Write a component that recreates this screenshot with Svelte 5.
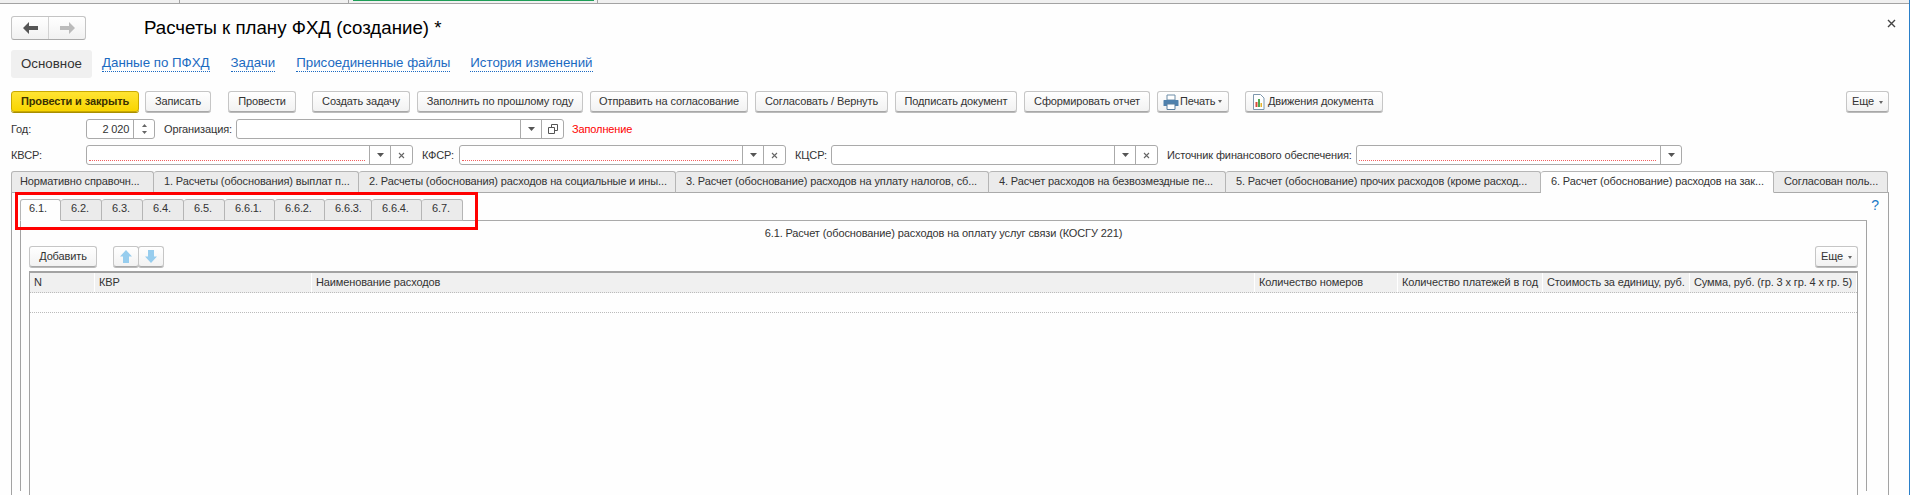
<script>
	const sections = [
		{ label: 'Основное', active: true, gap: 10 },
		{ label: 'Данные по ПФХД', gap: 21 },
		{ label: 'Задачи', gap: 21 },
		{ label: 'Присоединенные файлы', gap: 20 },
		{ label: 'История изменений', gap: 0 }
	];

	const commands = [
		{ label: 'Провести и закрыть', w: 128, gap: 6, primary: true },
		{ label: 'Записать', w: 66, gap: 17 },
		{ label: 'Провести', w: 68, gap: 16 },
		{ label: 'Создать задачу', w: 98, gap: 7 },
		{ label: 'Заполнить по прошлому году', w: 166, gap: 7 },
		{ label: 'Отправить на согласование', w: 158, gap: 7 },
		{ label: 'Согласовать / Вернуть', w: 133, gap: 7 },
		{ label: 'Подписать документ', w: 122, gap: 7 },
		{ label: 'Сформировать отчет', w: 126, gap: 7 }
	];

	const mainTabs = [
		{ label: 'Нормативно справочн...', w: 143 },
		{ label: '1. Расчеты (обоснования) выплат п...', w: 205 },
		{ label: '2. Расчеты (обоснования) расходов на социальные и ины...', w: 317 },
		{ label: '3. Расчет (обоснование) расходов на уплату налогов, сб...', w: 313 },
		{ label: '4. Расчет расходов на безвозмездные пе...', w: 237 },
		{ label: '5. Расчет (обоснование) прочих расходов (кроме расход...', w: 315 },
		{ label: '6. Расчет (обоснование) расходов на зак...', w: 233, active: true },
		{ label: 'Согласован поль...', w: 114 }
	];

	const subTabs = [
		{ label: '6.1.', w: 41, active: true },
		{ label: '6.2.', w: 41 },
		{ label: '6.3.', w: 41 },
		{ label: '6.4.', w: 41 },
		{ label: '6.5.', w: 41 },
		{ label: '6.6.1.', w: 50 },
		{ label: '6.6.2.', w: 50 },
		{ label: '6.6.3.', w: 47 },
		{ label: '6.6.4.', w: 50 },
		{ label: '6.7.', w: 41 }
	];

	const columns = [
		{ label: 'N', w: 65 },
		{ label: 'КВР', w: 217 },
		{ label: 'Наименование расходов', w: 943 },
		{ label: 'Количество номеров', w: 143 },
		{ label: 'Количество платежей в год', w: 145 },
		{ label: 'Стоимость за единицу, руб.', w: 147 },
		{ label: 'Сумма, руб. (гр. 3 х гр. 4 х гр. 5)', w: 167 }
	];
</script>

{#snippet field(width, required, clear, copy)}
	<div class="field" style={`width:${width}px`}>
		<div class="field-value">
			{#if required}<span class="required"></span>{/if}
		</div>
		<span class="field-btn">
			<svg width="7" height="4" viewBox="0 0 7 4"><path d="M0 0h7L3.5 4z" fill="#555" /></svg>
		</span>
		{#if clear}
			<span class="field-btn">
				<svg width="7" height="7" viewBox="0 0 7 7"><path d="M1 1l5 5M6 1L1 6" stroke="#666" stroke-width="1.1" /></svg>
			</span>
		{/if}
		{#if copy}
			<span class="field-btn">
				<svg width="10" height="10" viewBox="0 0 10 10" fill="none" stroke="#555"><path d="M3.5 3V.5h6v6H7" /><path d="M.5 3.5h6v6h-6z" /></svg>
			</span>
		{/if}
	</div>
{/snippet}

<div class="page">
	<div class="window-strip">
		<span class="strip-tab" style="width:180px"></span>
		<span class="strip-tab" style="width:169px"></span>
		<span class="strip-tab current" style="width:249px"><i></i></span>
	</div>

	<header class="title-row">
		<div class="nav-group">
			<button class="nav-btn" aria-label="Назад">
				<svg width="15" height="12" viewBox="0 0 15 12"><path d="M0 6l6-6v4h9v4H6v4z" fill="#555" /></svg>
			</button>
			<button class="nav-btn" aria-label="Вперед">
				<svg width="15" height="12" viewBox="0 0 15 12"><path d="M15 6L9 0v4H0v4h9v4z" fill="#bbb" /></svg>
			</button>
		</div>
		<h1>Расчеты к плану ФХД (создание) *</h1>
		<svg class="close" width="9" height="9" viewBox="0 0 9 9"><path d="M1 1l7 7M8 1L1 8" stroke="#444" stroke-width="1.4" /></svg>
	</header>

	<nav class="sections">
		{#each sections as s}
			<span class="section" class:active={s.active} style={`margin-right:${s.gap}px`}>{s.label}</span>
		{/each}
	</nav>

	<div class="commands">
		{#each commands as c}
			<button class="btn" class:primary={c.primary} style={`width:${c.w}px;margin-right:${c.gap}px`}>{c.label}</button>
		{/each}
		<button class="btn with-icon print">
			<svg width="16" height="16" viewBox="0 0 16 16">
				<path d="M4 1h8v5H4z" fill="#fff" stroke="#6f8ea8" />
				<path d="M1 6h14a.5.5 0 0 1 .5.5V12H12v-2H4v2H.5V6.5A.5.5 0 0 1 1 6z" fill="#4f81ad" />
				<path d="M4 10h8v5.5H4z" fill="#fff" stroke="#5a7f9f" />
			</svg>
			Печать <i class="caret"></i>
		</button>
		<button class="btn with-icon moves">
			<svg width="13" height="16" viewBox="0 0 13 16">
				<path d="M1.5.5h7l3.500 3.500v11.500h-10.500z" fill="#fff" stroke="#7d97ad" />
				<path d="M3.500 8h2v5h-2z" fill="#d84a3a" />
				<path d="M6 5h2v8H6z" fill="#4fa64f" />
				<path d="M8.500 9h1.500v4H8.500z" fill="#e5b32a" />
			</svg>
			Движения документа
		</button>
		<button class="btn more top-more">Еще <i class="caret"></i></button>
	</div>

	<div class="form-row year-row">
		<span class="row-label">Год:</span>
		<div class="field year">
			<div class="year-value">2 020</div>
			<span class="spin">
				<svg width="5" height="3" viewBox="0 0 5 3"><path d="M0 3h5L2.500 0z" fill="#666" /></svg>
				<svg width="5" height="3" viewBox="0 0 5 3"><path d="M0 0h5L2.500 3z" fill="#666" /></svg>
			</span>
		</div>
		<span class="org-label">Организация:</span>
		{@render field(328, false, false, true)}
		<span class="status">Заполнение</span>
	</div>

	<div class="form-row codes-row">
		<span class="row-label">КВСР:</span>
		{@render field(327, true, true, false)}
		<span class="kfsr-label">КФСР:</span>
		{@render field(327, true, true, false)}
		<span class="kcsr-label">КЦСР:</span>
		{@render field(327, false, true, false)}
		<span class="source-label">Источник финансового обеспечения:</span>
		{@render field(326, true, false, false)}
	</div>

	<div class="main-tabs">
		{#each mainTabs as t}
			<div class="main-tab" class:active={t.active} style={`width:${t.w}px`}>{t.label}</div>
		{/each}
	</div>

	<section class="main-panel">
		<div class="help-row"><span class="help">?</span></div>

		<div class="sub-wrap">
			<div class="sub-tabs">
				{#each subTabs as t}
					<div class="sub-tab" class:active={t.active} style={`width:${t.w}px`}>{t.label}</div>
				{/each}
				<span class="marker"></span>
			</div>

			<div class="sub-panel">
				<div class="sub-title">6.1. Расчет (обоснование) расходов на оплату услуг связи (КОСГУ 221)</div>
				<div class="table-bar">
					<button class="btn add">Добавить</button>
					<div class="move-group">
						<button class="btn move" aria-label="Вверх">
							<svg width="12" height="13" viewBox="0 0 12 13"><path d="M6 0l6 6.500H9V13H3V6.500H0z" fill="#97cdee" /></svg>
						</button>
						<button class="btn move" aria-label="Вниз">
							<svg width="12" height="13" viewBox="0 0 12 13"><path d="M6 13L0 6.500h3V0h6v6.500h3z" fill="#97cdee" /></svg>
						</button>
					</div>
					<button class="btn more">Еще <i class="caret"></i></button>
				</div>

				<div class="table">
					<div class="thead">
						{#each columns as c}
							<div class="th" style={`width:${c.w}px`}>{c.label}</div>
						{/each}
					</div>
					<div class="empty-row"></div>
				</div>
			</div>
		</div>
	</section>
</div>

<style>
	:global(body) {
		margin: 0;
		background: #fff;
	}

	.page {
		width: 1909px;
		height: 495px;
		overflow: hidden;
		border-right: 1px solid #2a7fc9;
		background: #fefefe;
		font: 11px/1 'Liberation Sans', Arial, sans-serif;
		letter-spacing: -0.12px;
		color: #333;
	}

	button {
		font: inherit;
		letter-spacing: inherit;
		color: inherit;
		padding: 0;
		cursor: pointer;
	}

	.window-strip {
		display: flex;
		height: 3px;
		background: #f0f0f0;
		border-bottom: 1px solid #a3a3a3;
	}
	.strip-tab {
		box-sizing: border-box;
		border-right: 1px solid #a3a3a3;
	}
	.strip-tab.current {
		padding-left: 4px;
	}
	.strip-tab.current i {
		display: block;
		width: 241px;
		height: 1px;
		background: #1e9e57;
	}

	.title-row {
		display: flex;
		align-items: center;
		height: 24px;
		padding: 12px 0 0 11px;
	}
	.nav-group {
		display: flex;
		width: 75px;
		height: 24px;
		box-sizing: border-box;
		border: 1px solid #c4c4c4;
		border-bottom-color: #aaa;
		border-radius: 3px;
		background: linear-gradient(#fff, #f1f1f1);
	}
	.nav-btn {
		flex: 1;
		display: flex;
		align-items: center;
		justify-content: center;
		border: 0;
		background: none;
	}
	.nav-btn + .nav-btn {
		border-left: 1px solid #d2d2d2;
	}
	h1 {
		margin: 0 0 0 58px;
		font-size: 18.7px;
		font-weight: 400;
		letter-spacing: 0;
		color: #000;
	}
	.close {
		margin-left: auto;
		margin-right: 13px;
		margin-top: -10px;
	}

	.sections {
		display: flex;
		align-items: center;
		height: 28px;
		margin: 10px 0 0 11px;
		font-size: 13.3px;
		letter-spacing: 0;
	}
	.section {
		color: #1b6ac1;
		border-bottom: 1px dotted #1b6ac1;
		padding-bottom: 1px;
	}
	.section.active {
		width: 81px;
		height: 28px;
		box-sizing: border-box;
		line-height: 28px;
		text-align: center;
		padding: 0;
		border: 0;
		border-radius: 3px;
		background: #f0f0f0;
		color: #333;
	}

	.commands {
		display: flex;
		height: 21px;
		margin: 13px 0 0 11px;
		padding-right: 20px;
	}
	.btn {
		height: 21px;
		box-sizing: border-box;
		border: 1px solid #c6c6c6;
		border-bottom: 1px solid #a8a8a8;
		border-radius: 3px;
		background: linear-gradient(#fff, #f2f2f2);
		box-shadow: 0 1px 0 #bbb;
		text-align: center;
		white-space: nowrap;
		color: #333;
	}
	.btn.primary {
		background: linear-gradient(#ffe433, #f9d500);
		border-color: #c9a900;
		box-shadow: 0 1px 0 #a98f00;
		font-weight: 700;
		color: #3b3100;
	}
	.with-icon {
		display: flex;
		align-items: center;
	}
	.print {
		width: 72px;
		margin-right: 16px;
		padding-left: 5px;
		gap: 1px;
	}
	.moves {
		width: 138px;
		padding-left: 6px;
		gap: 3px;
	}
	.more {
		width: 43px;
	}
	.top-more {
		margin-left: auto;
	}
	.caret {
		display: inline-block;
		margin-left: 2px;
		vertical-align: middle;
		border: 2px solid transparent;
		border-top: 3px solid #666;
		border-bottom: 0;
	}

	.form-row {
		display: flex;
		align-items: center;
		height: 20px;
		padding-left: 11px;
	}
	.year-row {
		margin-top: 7px;
	}
	.codes-row {
		margin-top: 6px;
	}
	.row-label {
		width: 75px;
		flex: none;
	}
	.org-label {
		width: 72px;
		margin-left: 9px;
		white-space: nowrap;
	}
	.kfsr-label {
		width: 37px;
		margin-left: 9px;
	}
	.kcsr-label {
		width: 36px;
		margin-left: 9px;
	}
	.source-label {
		width: 189px;
		margin-left: 9px;
		white-space: nowrap;
	}
	.status {
		margin-left: 8px;
		color: #f00;
	}
	.field {
		display: flex;
		flex: none;
		height: 20px;
		box-sizing: border-box;
		border: 1px solid #aaa;
		border-radius: 3px;
		background: #fff;
	}
	.field-value {
		flex: 1;
	}
	.required {
		display: block;
		margin: 14px 4px 0 2px;
		border-bottom: 1px dotted #f06060;
	}
	.field-btn {
		display: flex;
		align-items: center;
		justify-content: center;
		width: 20px;
		border-left: 1px solid #aaa;
	}
	.field-btn + .field-btn {
		width: 21px;
	}
	.year {
		width: 69px;
	}
	.year-value {
		width: 43px;
		line-height: 18px;
		text-align: right;
	}
	.spin {
		display: flex;
		flex-direction: column;
		align-items: center;
		justify-content: center;
		gap: 4px;
		width: 20px;
		margin-left: 4px;
		border-left: 1px solid #aaa;
	}

	.main-tabs {
		display: flex;
		height: 21px;
		margin: 6px 0 0 11px;
		border-bottom: 1px solid #aaa;
		width: 1878px;
	}
	.main-tab {
		box-sizing: border-box;
		height: 22px;
		padding-left: 10px;
		line-height: 18px;
		white-space: nowrap;
		overflow: hidden;
		background: #ebebeb;
		border: 1px solid #b5b5b5;
		border-left: 0;
		border-bottom: 1px solid #aaa;
		border-radius: 3px 3px 0 0;
		color: #333;
	}
	.main-tab:first-child {
		padding-left: 8px;
		border-left: 1px solid #b5b5b5;
	}
	.main-tab.active {
		background: #fefefe;
		border-bottom-color: #fefefe;
	}

	.main-panel {
		width: 1876px;
		height: 310px;
		margin-left: 11px;
		border-left: 1px solid #a3a3a3;
		border-right: 1px solid #a3a3a3;
	}
	.help-row {
		display: flex;
		justify-content: flex-end;
		height: 0;
		padding-right: 9px;
	}
	.help {
		margin-top: 5px;
		height: 14px;
		font-size: 14px;
		letter-spacing: 0;
		color: #1b7ac6;
	}

	.sub-wrap {
		padding: 6px 0 0 8px;
		width: 1847px;
	}
	.sub-tabs {
		display: flex;
		position: relative;
		height: 21px;
		border-bottom: 1px solid #aaa;
	}
	.sub-tab {
		box-sizing: border-box;
		height: 22px;
		padding: 3px 0 0 10px;
		background: #ebebeb;
		border: 1px solid #b5b5b5;
		border-left: 0;
		border-radius: 3px 3px 0 0;
	}
	.sub-tab:first-child {
		padding-left: 8px;
		border-left: 1px solid #b5b5b5;
	}
	.sub-tab.active {
		background: #fefefe;
		border-bottom-color: #fefefe;
	}
	.marker {
		position: absolute;
		left: -5px;
		top: -7px;
		width: 457px;
		height: 32px;
		border: 3px solid #f00;
	}

	.sub-panel {
		height: 270px;
		border-left: 1px solid #a3a3a3;
		border-right: 1px solid #a3a3a3;
		padding: 0 8px;
	}
	.sub-title {
		padding-top: 7px;
		height: 18px;
		text-align: center;
	}
	.table-bar {
		display: flex;
		height: 21px;
	}
	.add {
		width: 68px;
		margin-right: 16px;
	}
	.move-group {
		display: flex;
	}
	.move {
		display: flex;
		align-items: center;
		justify-content: center;
		width: 26px;
		margin-right: -1px;
	}
	.table-bar > .more {
		margin-left: auto;
	}
	.table {
		margin-top: 4px;
		height: 240px;
		border: 1px solid #a3a3a3;
		border-top-width: 2px;
	}
	.thead {
		display: flex;
		height: 19px;
		background: #f0f0f0;
		border-bottom: 1px dotted #bbb;
	}
	.th {
		box-sizing: border-box;
		line-height: 19px;
		padding-left: 4px;
		white-space: nowrap;
		border-right: 1px solid #fff;
	}
	.empty-row {
		height: 19px;
		border-bottom: 1px dotted #bbb;
	}
</style>
